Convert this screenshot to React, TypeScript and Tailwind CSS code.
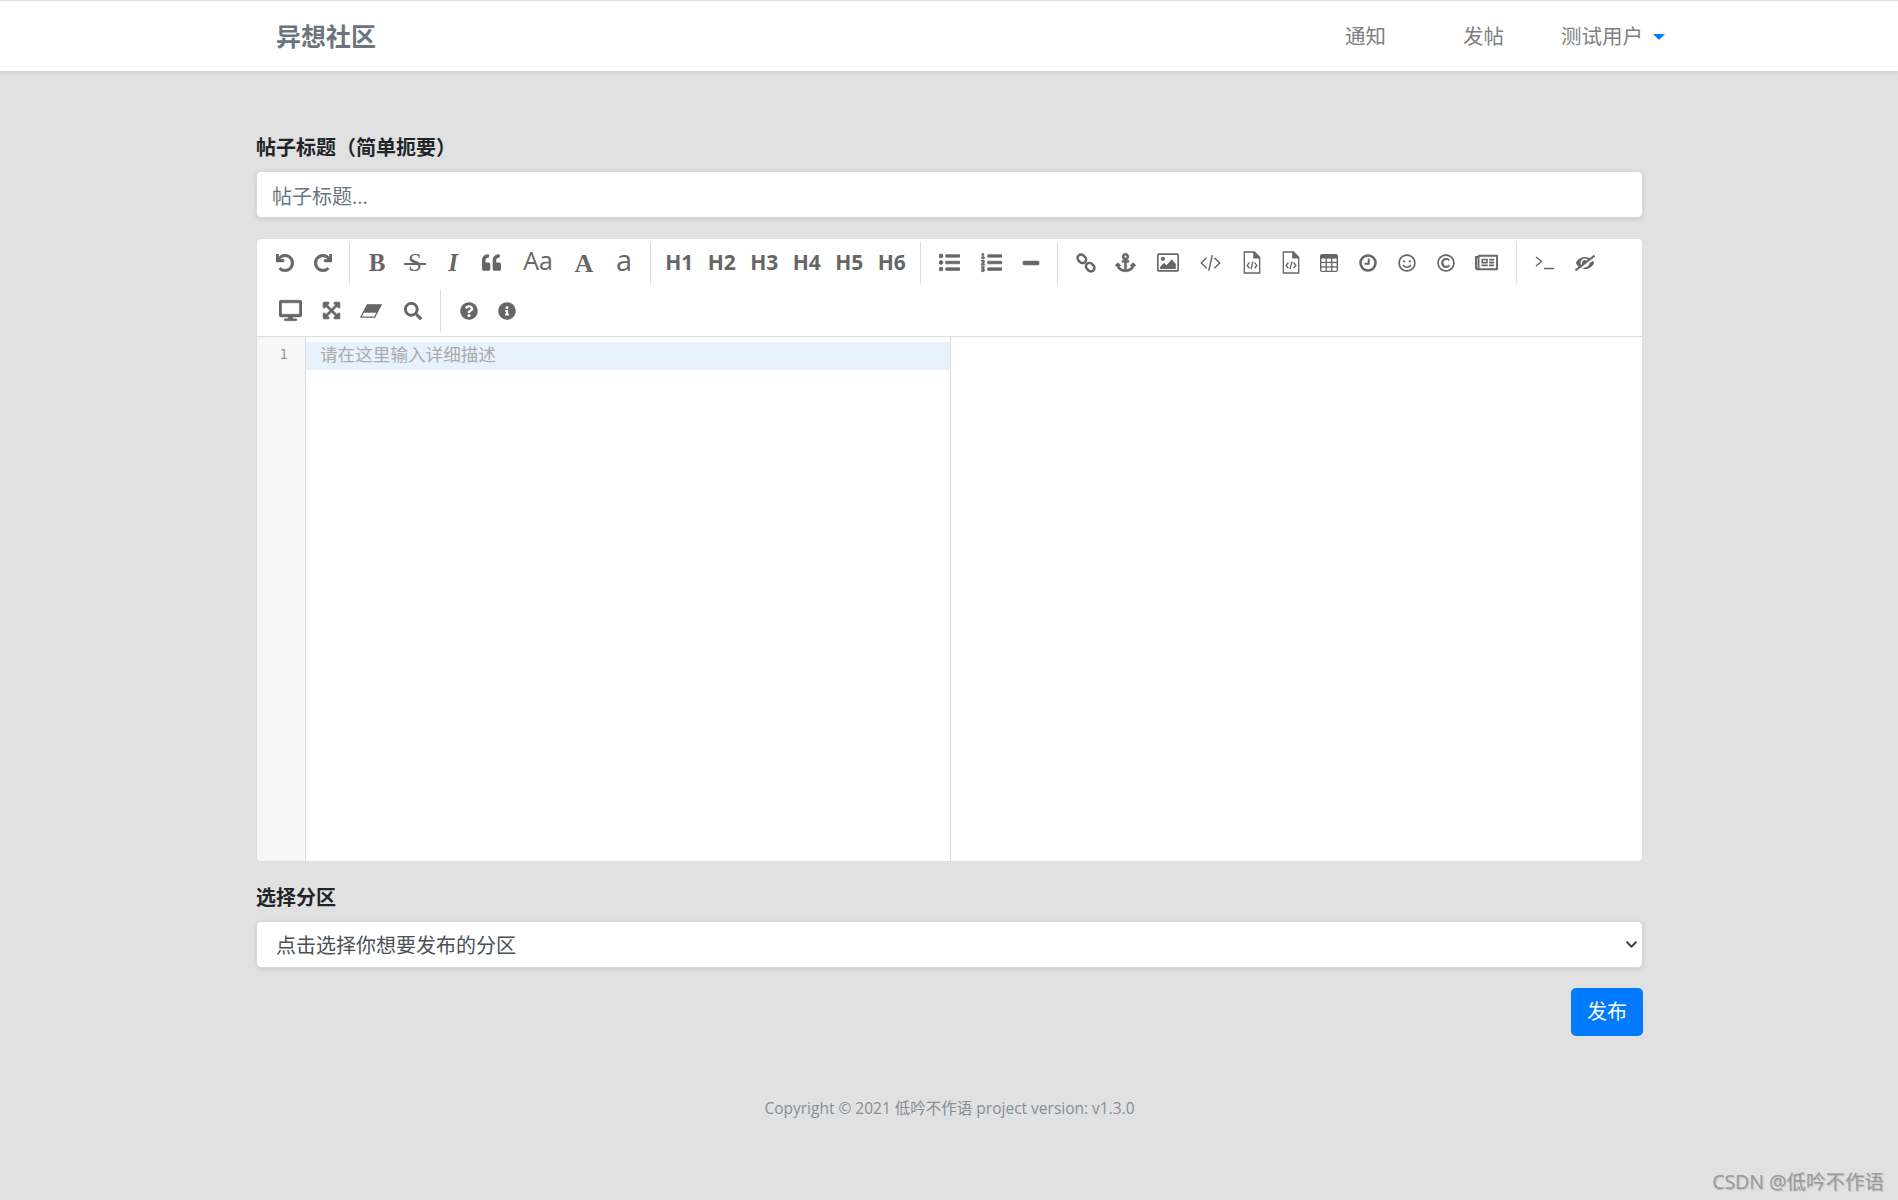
import type { ReactNode } from "react";
import {
  FaAnchor,
  FaChevronDown,
  FaDesktop,
  FaExpandArrowsAlt,
  FaEyeSlash,
  FaInfoCircle,
  FaListOl,
  FaListUl,
  FaMinus,
  FaQuestionCircle,
  FaQuoteLeft,
  FaRedo,
  FaRegCopyright,
  FaRegNewspaper,
  FaRegSmile,
  FaSearch,
  FaUndo,
} from "react-icons/fa";

const sans = "font-['Open_Sans','Noto_Sans_CJK_SC',sans-serif]";
const serif = "font-['Liberation_Serif',serif]";

/* ---- toolbar pieces ---- */
function Tool({ w, children }: { w: string; children: ReactNode }) {
  return <span className={`flex h-full shrink-0 items-center justify-center text-[#666] ${w}`}>{children}</span>;
}

function Divider({ className = "" }: { className?: string }) {
  return <span className={`h-[42px] w-px shrink-0 bg-[#ddd] ${className}`} />;
}

function Heading({ n }: { n: number }) {
  return (
    <Tool w="w-[42.5px]">
      <span className="text-[21px] font-bold">H{n}</span>
    </Tool>
  );
}

/* ---- font-awesome 4 shapes the icon package doesn't have ---- */
function LinkIcon() {
  return (
    <svg width="20" height="20" viewBox="0 0 24 24" fill="none" stroke="currentColor" strokeWidth="3">
      <rect x="1.5" y="2.75" width="11" height="8.5" rx="4.25" transform="rotate(45 7 7)" />
      <rect x="11.5" y="12.75" width="11" height="8.5" rx="4.25" transform="rotate(45 17 17)" />
    </svg>
  );
}

function ImageIcon() {
  return (
    <svg width="22" height="19" viewBox="0 0 24 20" fill="none">
      <rect x="0.9" y="0.9" width="22.2" height="18.2" rx="1" stroke="currentColor" strokeWidth="1.8" />
      <circle cx="6.5" cy="6" r="2.3" fill="currentColor" />
      <path d="M3.5 17V14.5L7.5 10.5L10.5 13L16 6.5L20.5 11.5V17Z" fill="currentColor" />
    </svg>
  );
}

function CodeIcon() {
  return (
    <svg width="21" height="18" viewBox="0 0 24 20" fill="none" stroke="currentColor" strokeWidth="1.7">
      <path d="M7.5 4L1.5 10L7.5 16M16.5 4L22.5 10L16.5 16M14 1L10 19" />
    </svg>
  );
}

function FileCodeIcon() {
  return (
    <svg width="18" height="23" viewBox="0 0 18 24" fill="none" stroke="currentColor" strokeWidth="1.4">
      <path d="M1 1H11.5L17 6.5V23H1Z" />
      <path d="M11 1V7H17" fill="currentColor" />
      <path d="M6.3 12L4 15L6.3 18M11.7 12L14 15L11.7 18M10 11L8 19" />
    </svg>
  );
}

function TableIcon() {
  const cols = [1.4, 6.9, 12.4];
  const rows = [4.6, 9.1, 13.6];
  return (
    <svg width="18" height="18" viewBox="0 0 18 18">
      <rect width="18" height="18" rx="2" fill="currentColor" />
      {rows.map((y) => cols.map((x) => <rect key={`${x}-${y}`} x={x} y={y} width="4.2" height="3.2" fill="#fff" />))}
    </svg>
  );
}

function ClockIcon() {
  return (
    <svg width="18" height="18" viewBox="0 0 24 24" fill="none" stroke="currentColor">
      <circle cx="12" cy="12" r="10" strokeWidth="3.4" />
      <path d="M13 6V13H7.5" strokeWidth="2.6" />
    </svg>
  );
}

function EraserIcon() {
  return (
    <svg width="22" height="14" viewBox="0 0 24 15">
      <path d="M8 0.8H23L16 14.2H1Z" fill="#fff" stroke="currentColor" strokeWidth="1.4" />
      <path d="M8 0.8H23L18.5 9.5H3.5Z" fill="currentColor" />
    </svg>
  );
}

function TerminalIcon() {
  return (
    <svg width="19" height="15" viewBox="0 0 19 15" fill="none" stroke="currentColor" strokeWidth="1.4">
      <path d="M1 2L6.5 6.5L1 11M9 13.5H19" />
    </svg>
  );
}

function Toolbar() {
  return (
    <div className="h-[98px] border-b border-[#ddd] pl-[9px]">
      <div className="flex h-[47px] items-center">
        <Tool w="w-[38px]"><FaUndo size={18} stroke="currentColor" strokeWidth={18} /></Tool>
        <Tool w="w-[38px]"><FaRedo size={18} stroke="currentColor" strokeWidth={18} /></Tool>
        <Divider className="ml-[7px]" />
        <Tool w="w-[38px] ml-[8px]"><span className={`${serif} text-[25px] leading-none font-bold`}>B</span></Tool>
        <Tool w="w-[38px]">
          <span className={`${serif} relative text-[25px] leading-none`}>
            S<span className="absolute top-[13px] -left-[4px] h-[1.5px] w-[22px] bg-[#666]" />
          </span>
        </Tool>
        <Tool w="w-[38px]"><span className={`${serif} text-[25px] leading-none font-bold italic`}>I</span></Tool>
        <Tool w="w-[38px]"><FaQuoteLeft size={19} /></Tool>
        <Tool w="w-[56px]"><span className="-mt-1 text-[25px] leading-none">Aa</span></Tool>
        <Tool w="w-[36px]"><span className={`${serif} mt-0.5 text-[26px] leading-none font-bold`}>A</span></Tool>
        <Tool w="w-[44px]"><span className="-mt-1.5 text-[29px] leading-none">a</span></Tool>
        <Divider className="ml-[4px]" />
        <div className="ml-[7px] flex h-full">
          {[1, 2, 3, 4, 5, 6].map((n) => <Heading key={n} n={n} />)}
        </div>
        <Divider className="ml-[6.9px]" />
        <Tool w="w-[38px] ml-[10px]"><FaListUl size={21} stroke="currentColor" strokeWidth={16} /></Tool>
        <Tool w="w-[42px] ml-[2px]"><FaListOl size={21} stroke="currentColor" strokeWidth={16} /></Tool>
        <Tool w="w-[36px]"><FaMinus size={18} stroke="currentColor" strokeWidth={30} /></Tool>
        <Divider className="ml-[8px]" />
        <Tool w="w-[38px] ml-[9px]"><LinkIcon /></Tool>
        <Tool w="w-[42px]"><FaAnchor size={21} stroke="currentColor" strokeWidth={10} /></Tool>
        <Tool w="w-[42px]"><ImageIcon /></Tool>
        <Tool w="w-[43px]"><CodeIcon /></Tool>
        <Tool w="w-[40px]"><FileCodeIcon /></Tool>
        <Tool w="w-[38px]"><FileCodeIcon /></Tool>
        <Tool w="w-[39px]"><TableIcon /></Tool>
        <Tool w="w-[39px]"><ClockIcon /></Tool>
        <Tool w="w-[39px]"><FaRegSmile size={18} /></Tool>
        <Tool w="w-[38px]"><FaRegCopyright size={18} /></Tool>
        <Tool w="w-[44px]"><FaRegNewspaper size={23} /></Tool>
        <Divider className="ml-[7px]" />
        <Tool w="w-[38px] ml-[9px]"><TerminalIcon /></Tool>
        <Tool w="w-[42px]"><FaEyeSlash size={20} className="-scale-x-100" /></Tool>
      </div>
      <div className="flex h-[49px] items-center">
        <Tool w="w-[48px]"><FaDesktop size={23} stroke="currentColor" strokeWidth={14} /></Tool>
        <Tool w="w-[34px]"><FaExpandArrowsAlt size={19} stroke="currentColor" strokeWidth={24} /></Tool>
        <Tool w="w-[46px]"><EraserIcon /></Tool>
        <Tool w="w-[38px]"><FaSearch size={18} /></Tool>
        <Divider className="ml-[8px]" />
        <Tool w="w-[38px] ml-[9px]"><FaQuestionCircle size={18} /></Tool>
        <Tool w="w-[38px]"><FaInfoCircle size={18} /></Tool>
      </div>
    </div>
  );
}

export default function App() {
  return (
    <div className={`relative min-h-[1200px] bg-[#e1e1e1] ${sans}`}>
      {/* ---- NAVBAR ---- */}
      <header className="flex h-[71px] items-center justify-between border-t border-[#ddd] bg-white pt-[1px] pl-[276px] pr-[233px] shadow-[0_2px_4px_rgba(0,0,0,0.08)]">
        <span className="text-[25px] font-bold text-[#6c757d]">异想社区</span>
        <nav className="flex items-center text-[20.5px] text-[#7f7f7f]">
          <span>通知</span>
          <span className="ml-[77px]">发帖</span>
          <span className="ml-[57px]">测试用户</span>
          <span className="ml-[10px] h-0 w-0 border-x-[6px] border-t-[6px] border-x-transparent border-t-[#007bff]" />
        </nav>
      </header>

      {/* ---- FORM ---- */}
      <main className="ml-[256px] w-[1387px] pt-[60px]">
        <label className="block text-[20px] leading-[34px] font-bold text-[#212529]">帖子标题（简单扼要）</label>
        <input
          placeholder="帖子标题..."
          className="mt-[6px] block h-[47px] w-full rounded-[5px] border border-[#d8d8d8] bg-white px-[15px] pt-[3px] text-[20px] shadow-[0_1px_4px_rgba(0,0,0,0.12)] outline-none placeholder:text-[#6c757d]"
        />

        <section className="mt-[20px] h-[624px] overflow-hidden rounded-[5px] border border-[#ddd] bg-white">
          <Toolbar />
          <div className="flex h-[525px]">
            <div className="w-[49px] shrink-0 border-r border-[#ddd] bg-[#f7f7f7] pt-[7px] pr-[17px] text-right font-['DejaVu_Sans_Mono',monospace] text-[14px] text-[#999]">
              1
            </div>
            <div className="w-[645px] shrink-0 border-r border-[#ddd] pt-[5px]">
              <div className="h-[28px] bg-[#e8f2fe] pl-[14px] text-[17.6px] leading-[25px] text-[#aaa]">请在这里输入详细描述</div>
            </div>
            <div className="flex-1" />
          </div>
        </section>

        <label className="mt-[19px] block text-[20px] leading-[34px] font-bold text-[#212529]">选择分区</label>
        <div className="relative mt-[6px]">
          <select className="block h-[47px] w-full appearance-none rounded-[5px] border border-[#d8d8d8] bg-white pt-[3px] pl-[19px] pr-[8px] text-[20px] text-[#495057] shadow-[0_1px_4px_rgba(0,0,0,0.12)] outline-none">
            <option>点击选择你想要发布的分区</option>
          </select>
          <FaChevronDown size={13} className="absolute top-[17px] right-[5px] text-[#444]" />
        </div>

        <div className="mt-[20px] flex justify-end">
          <button className="h-[48px] w-[72px] rounded-[5px] bg-[#007bff] text-[20px] text-white">发布</button>
        </div>

        <footer className="mt-[61px] text-center text-[15.5px] text-[#868e96]">
          Copyright © 2021 低吟不作语 project version: v1.3.0
        </footer>
      </main>

      {/* watermark */}
      <span className="absolute right-[14px] bottom-[4px] text-[19.5px] text-[#9a9a9a] [text-shadow:1px_1px_1px_rgba(120,120,120,0.35)]">
        CSDN @低吟不作语
      </span>
    </div>
  );
}
